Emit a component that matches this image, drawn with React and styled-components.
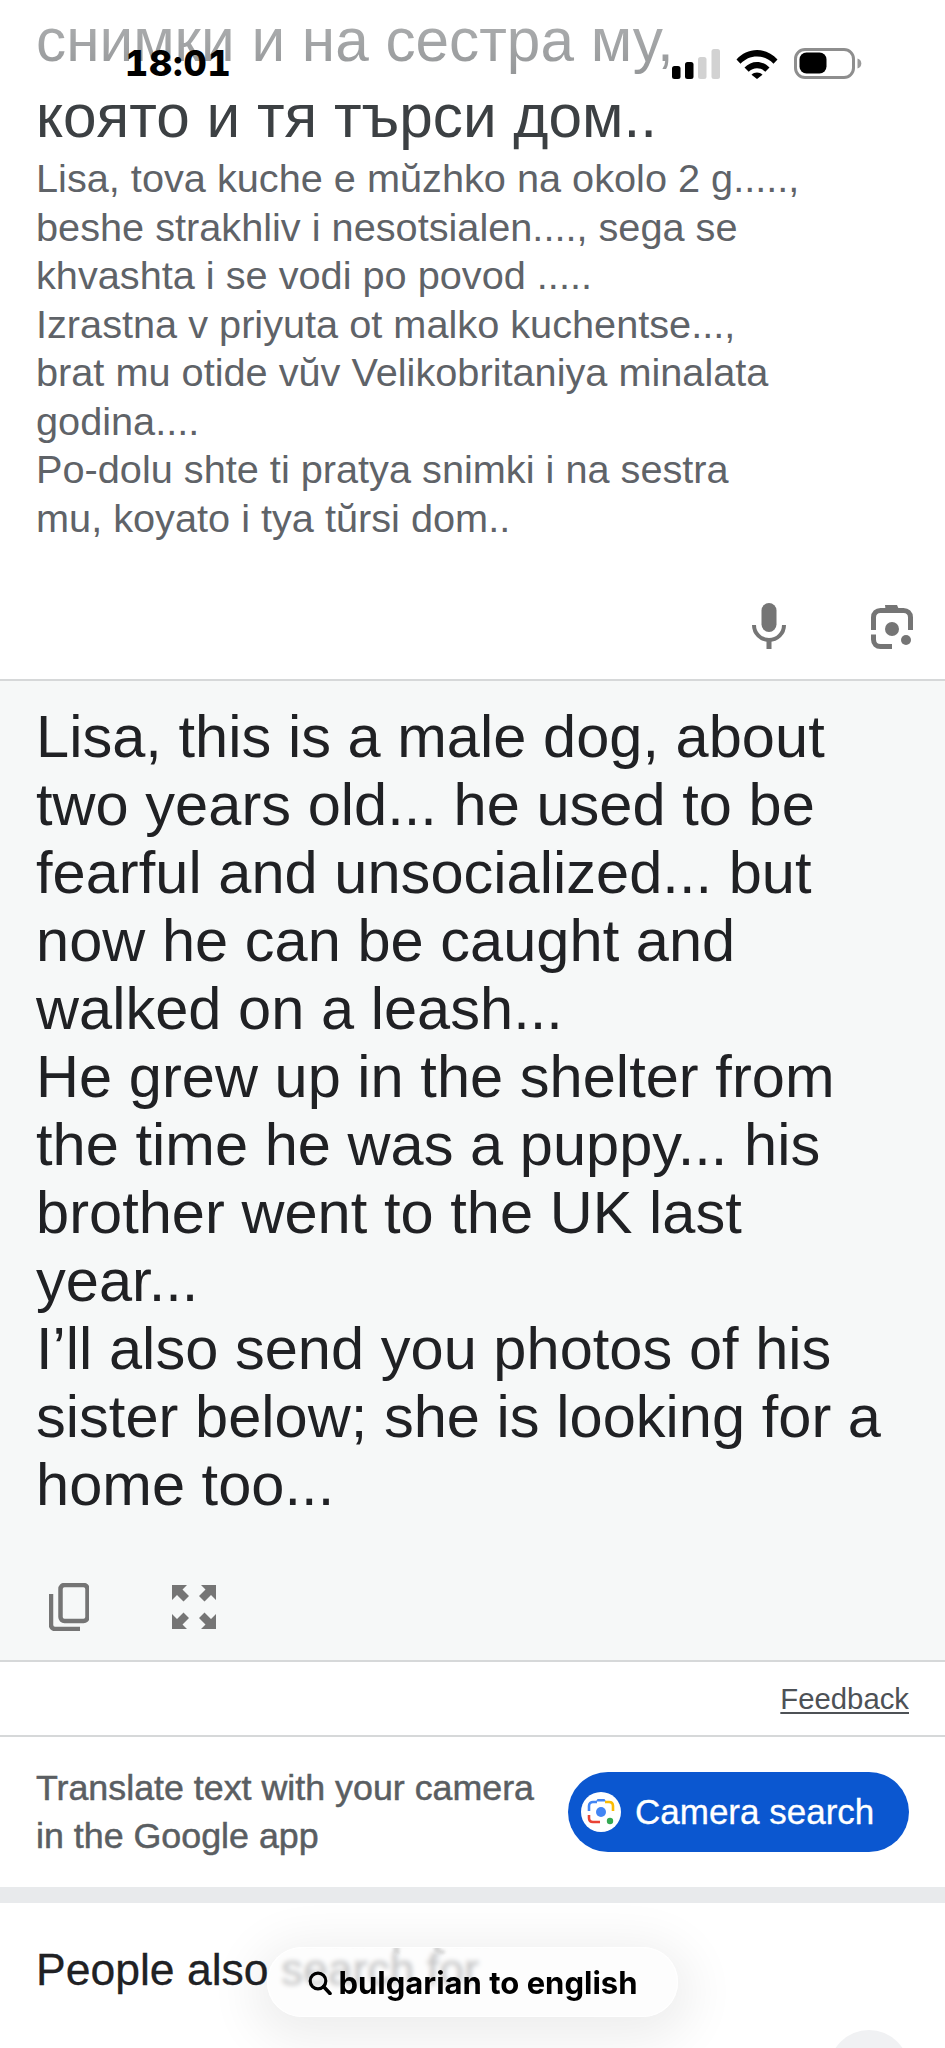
import React from "react";
import styled, { createGlobalStyle } from "styled-components";

const Global = createGlobalStyle`
  html, body { margin: 0; padding: 0; background: #fff; }
  body { font-family: "Liberation Sans", Arial, sans-serif; }
`;

const Page = styled.div`
  position: relative;
  width: 945px;
  height: 2048px;
  overflow: hidden;
  background: #fff;
`;

const StatusFade = styled.div`
  position: absolute;
  inset: 0 0 auto 0;
  height: 84px;
  background: linear-gradient(to bottom, rgba(255,255,255,.62) 0, rgba(255,255,255,.46) 74px, rgba(255,255,255,0) 84px);
`;

const StatusBar = styled.div`
  position: absolute;
  top: 48px;
  left: 125px;
  right: 83px;
  display: flex;
  align-items: center;
  justify-content: space-between;
  height: 31px;
`;

const Time = styled.span`
  font-family: Inter, sans-serif;
  font-weight: 800;
  font-size: 36px;
  line-height: 31px;
  font-variant-numeric: tabular-nums;
  letter-spacing: 0.8px;
  color: #000;
`;

const StatusIcons = styled.div`
  display: flex;
  align-items: center;
  gap: 16px;
`;

const Source = styled.section`
  padding: 2px 36px 0;
`;

const SourceText = styled.div`
  font-size: 60.3px;
  line-height: 76px;
  color: #3c4043;
  white-space: nowrap;
`;

const Romanized = styled.div`
  font-size: 39.7px;
  line-height: 48.5px;
  color: #5f6368;
  white-space: nowrap;
`;

const SourceActions = styled.div`
  display: flex;
  justify-content: flex-end;
  align-items: flex-end;
  gap: 85px;
  padding: 61px 32px 30px 0;
  height: 46px;
  border-bottom: 2px solid #d6d8d9;
`;

const Output = styled.section`
  background: #f6f8f8;
  padding: 22px 36px 0;
  box-sizing: border-box;
  height: 981px;
  border-bottom: 2px solid #d6d8d9;
  display: flex;
  flex-direction: column;
`;

const OutputText = styled.div`
  font-size: 59.5px;
  line-height: 68px;
  letter-spacing: 0.05px;
  color: #202124;
  white-space: nowrap;
`;

const OutputActions = styled.div`
  display: flex;
  align-items: center;
  gap: 83px;
  margin-top: 64px;
  padding-left: 13px;
`;

const FeedbackRow = styled.div`
  display: flex;
  justify-content: flex-end;
  align-items: center;
  height: 73px;
  padding-right: 36px;
  border-bottom: 2px solid #d6d8d9;
`;

const FeedbackLink = styled.a`
  font-size: 29.3px;
  color: #4d5156;
  text-decoration: underline;
  text-underline-offset: 3px;
`;

const Promo = styled.section`
  display: flex;
  align-items: center;
  justify-content: space-between;
  height: 150px;
  padding: 0 36px;
`;

const PromoText = styled.div`
  font-size: 35.8px;
  line-height: 48px;
  color: #5a5e62;
  -webkit-text-stroke: 0.5px #5a5e62;
  white-space: nowrap;
`;

const CameraButton = styled.button`
  display: flex;
  align-items: center;
  gap: 14px;
  width: 341px;
  height: 80px;
  padding: 0 0 0 13px;
  border: 0;
  border-radius: 40px;
  background: #0b57d0;
  color: #fff;
  font-family: "Liberation Sans", Arial, sans-serif;
  font-size: 35px;
  -webkit-text-stroke: 0.3px #fff;
`;

const LensBadge = styled.span`
  display: flex;
  align-items: center;
  justify-content: center;
  width: 40px;
  height: 40px;
  border-radius: 50%;
  background: #fff;
`;

const Band = styled.div`
  height: 16px;
  background: #e8eaec;
`;

const Related = styled.section`
  padding: 42px 36px 0;
`;

const RelatedTitle = styled.h2`
  margin: 0;
  font-size: 44.5px;
  line-height: 50px;
  font-weight: 400;
  color: #202124;
  -webkit-text-stroke: 0.3px #202124;
  white-space: nowrap;
`;

const ChipRow = styled.div`
  display: flex;
  justify-content: flex-end;
  margin-top: 35px;
`;

const ChipDot = styled.span`
  width: 80px;
  height: 80px;
  border-radius: 50%;
  background: #f0f1f3;
`;

const SearchPill = styled.div`
  position: absolute;
  left: 267px;
  top: 1947px;
  width: 411px;
  height: 70px;
  box-sizing: border-box;
  overflow: hidden;
  display: flex;
  align-items: center;
  justify-content: center;
  gap: 7px;
  padding-top: 1px;
  border-radius: 35px;
  background: rgba(252,252,252,.74);
  backdrop-filter: blur(2.5px);
  border: 1.5px solid rgba(255,255,255,.95);
  box-shadow: 0 10px 50px 14px rgba(0,0,0,.07);
  font-family: Inter, sans-serif;
  font-weight: 700;
  font-size: 31px;
  color: #000;
  white-space: nowrap;

  &::before {
    content: "search for";
    position: absolute;
    left: 6px;
    top: -36px;
    font-family: "Liberation Sans", Arial, sans-serif;
    font-weight: 700;
    font-size: 44.500px;
    line-height: 50px;
    color: #d4d4d4;
    transform: scaleY(-1);
    filter: blur(1.5px);
  }
`;

const PillLabel = styled.span`
  position: relative;
`;

const PillGlyph = styled.svg`
  position: relative;
  flex: none;
`;

const SignalIcon = () => (
  <svg width="48" height="30" viewBox="0 0 48 30">
    <rect x="0" y="17" width="8.500" height="13" rx="2.500" fill="#000" />
    <rect x="13" y="13" width="8.500" height="17" rx="2.500" fill="#000" />
    <rect x="26" y="8" width="8.500" height="22" rx="2.500" fill="#d2d2d2" />
    <rect x="39.500" y="0" width="8.500" height="30" rx="2.500" fill="#d2d2d2" />
  </svg>
);

const WifiIcon = () => (
  <svg width="42" height="30" viewBox="0 0 42 30" fill="#000">
    <path d="M0.500 10.500C6 4.500 13 1 21 1s15 3.500 20.500 9.500l-4 4.300C33 10 27.500 7.500 21 7.500S9 10 4.500 14.800z" />
    <path d="M8.500 18.500C12 15 16.300 13 21 13s9 2 12.500 5.500l-4.200 4.300C27 20.500 24.200 19.300 21 19.300s-6 1.200-8.300 3.500z" />
    <path d="M15.500 25.800c1.400-1.400 3.400-2.300 5.500-2.300s4.100.900 5.500 2.300L21 30z" />
  </svg>
);

const BatteryIcon = () => (
  <svg width="68" height="31" viewBox="0 0 68 31">
    <rect x="1.500" y="1.500" width="58" height="28" rx="9.500" fill="none" stroke="#8e8e8e" strokeWidth="3" />
    <rect x="5.500" y="4.500" width="27" height="21" rx="7" fill="#000" />
    <path d="M63.500 10.500c2.400.700 3.800 2.600 3.800 5s-1.400 4.300-3.800 5z" fill="#9a9a9a" />
  </svg>
);

const MicIcon = () => (
  <svg width="34" height="46" viewBox="0 0 34 46">
    <rect x="9.500" y="0" width="15" height="29" rx="7.500" fill="#757575" />
    <path d="M2 22c0 8.500 6.700 15 15 15s15-6.500 15-15" fill="none" stroke="#757575" strokeWidth="4" />
    <rect x="14.500" y="36" width="5" height="10" fill="#757575" />
  </svg>
);

const LensIcon = () => (
  <svg width="42" height="44" viewBox="0 0 42 44">
    <path d="M14 0h12l2 4.500H14.500z" fill="#757575" />
    <path d="M2.500 25V12.500C2.500 8 5.500 5.500 9.500 5.500h23c4 0 7 2.500 7 7V25" fill="none" stroke="#757575" strokeWidth="5" />
    <path d="M2.500 29.500v5c0 4.500 3 7 7 7H21" fill="none" stroke="#757575" strokeWidth="5" />
    <circle cx="21" cy="24" r="7" fill="#757575" />
    <circle cx="35" cy="35" r="5" fill="#757575" />
  </svg>
);

const CopyIcon = () => (
  <svg width="40" height="48" viewBox="0 0 40 48">
    <rect x="11.500" y="2" width="27" height="36" rx="4" fill="none" stroke="#757575" strokeWidth="4.500" />
    <path d="M2 11v31c0 2 1.500 4 4 4h25" fill="none" stroke="#757575" strokeWidth="4.500" />
  </svg>
);

const ExpandIcon = () => (
  <svg width="44" height="44" viewBox="0 0 44 44" fill="#757575">
    <path d="M0 0h15l-4.500 4.500 6.500 6.500-5.500 5.500-6.500-6.500L0 15z" />
    <path d="M44 0H29l4.500 4.500-6.500 6.500 5.500 5.500 6.500-6.500L44 15z" />
    <path d="M0 44H15l-4.500-4.500 6.500-6.500-5.500-5.500-6.500 6.500L0 29z" />
    <path d="M44 44H29l4.500-4.500-6.500-6.500 5.500-5.500 6.500 6.500L44 29z" />
  </svg>
);

const ColorLens = () => (
  <svg width="30" height="30" viewBox="0 0 30 30" fill="none">
    <path d="M3 14V9c0-2.500 2-4 4-4h4" stroke="#4285f4" strokeWidth="2.600" />
    <path d="M10 4.500l1.500-2.500h7l1.500 2.500z" fill="#4285f4" />
    <path d="M19 5h4c2.500 0 4 1.500 4 4v5" stroke="#fbbc04" strokeWidth="2.600" />
    <path d="M3 18v3c0 2.500 1.500 4 4 4h7" stroke="#ea4335" strokeWidth="2.600" />
    <circle cx="15" cy="15" r="5" fill="#4285f4" />
    <circle cx="24" cy="24" r="3.200" fill="#34a853" />
  </svg>
);

const SearchGlyph = () => (
  <PillGlyph width="24" height="24" viewBox="0 0 24 24" fill="none">
    <circle cx="10" cy="10" r="7.800" stroke="#000" strokeWidth="3.200" />
    <path d="M15.500 15.500L22 22.500" stroke="#000" strokeWidth="3.600" strokeLinecap="round" />
  </PillGlyph>
);

export default function App() {
  return (
    <Page>
      <Global />
      <Source>
        <SourceText>
          снимки и на сестра му,
          <br />
          която и тя търси дом..
        </SourceText>
        <Romanized>
          Lisa, tova kuche e mŭzhko na okolo 2 g.....,
          <br />
          beshe strakhliv i nesotsialen...., sega se
          <br />
          khvashta i se vodi po povod .....
          <br />
          Izrastna v priyuta ot malko kuchentse...,
          <br />
          brat mu otide vŭv Velikobritaniya minalata
          <br />
          godina....
          <br />
          Po-dolu shte ti pratya snimki i na sestra
          <br />
          mu, koyato i tya tŭrsi dom..
        </Romanized>
      </Source>
      <SourceActions>
        <MicIcon />
        <LensIcon />
      </SourceActions>
      <Output>
        <OutputText>
          Lisa, this is a male dog, about
          <br />
          two years old... he used to be
          <br />
          fearful and unsocialized... but
          <br />
          now he can be caught and
          <br />
          walked on a leash...
          <br />
          He grew up in the shelter from
          <br />
          the time he was a puppy... his
          <br />
          brother went to the UK last
          <br />
          year...
          <br />
          I’ll also send you photos of his
          <br />
          sister below; she is looking for a
          <br />
          home too...
        </OutputText>
        <OutputActions>
          <CopyIcon />
          <ExpandIcon />
        </OutputActions>
      </Output>
      <FeedbackRow>
        <FeedbackLink>Feedback</FeedbackLink>
      </FeedbackRow>
      <Promo>
        <PromoText>
          Translate text with your camera
          <br />
          in the Google app
        </PromoText>
        <CameraButton>
          <LensBadge>
            <ColorLens />
          </LensBadge>
          Camera search
        </CameraButton>
      </Promo>
      <Band />
      <Related>
        <RelatedTitle>People also search for</RelatedTitle>
        <ChipRow>
          <ChipDot />
        </ChipRow>
      </Related>
      <StatusFade />
      <StatusBar>
        <Time>18:01</Time>
        <StatusIcons>
          <SignalIcon />
          <WifiIcon />
          <BatteryIcon />
        </StatusIcons>
      </StatusBar>
      <SearchPill>
        <SearchGlyph />
        <PillLabel>bulgarian to english</PillLabel>
      </SearchPill>
    </Page>
  );
}
